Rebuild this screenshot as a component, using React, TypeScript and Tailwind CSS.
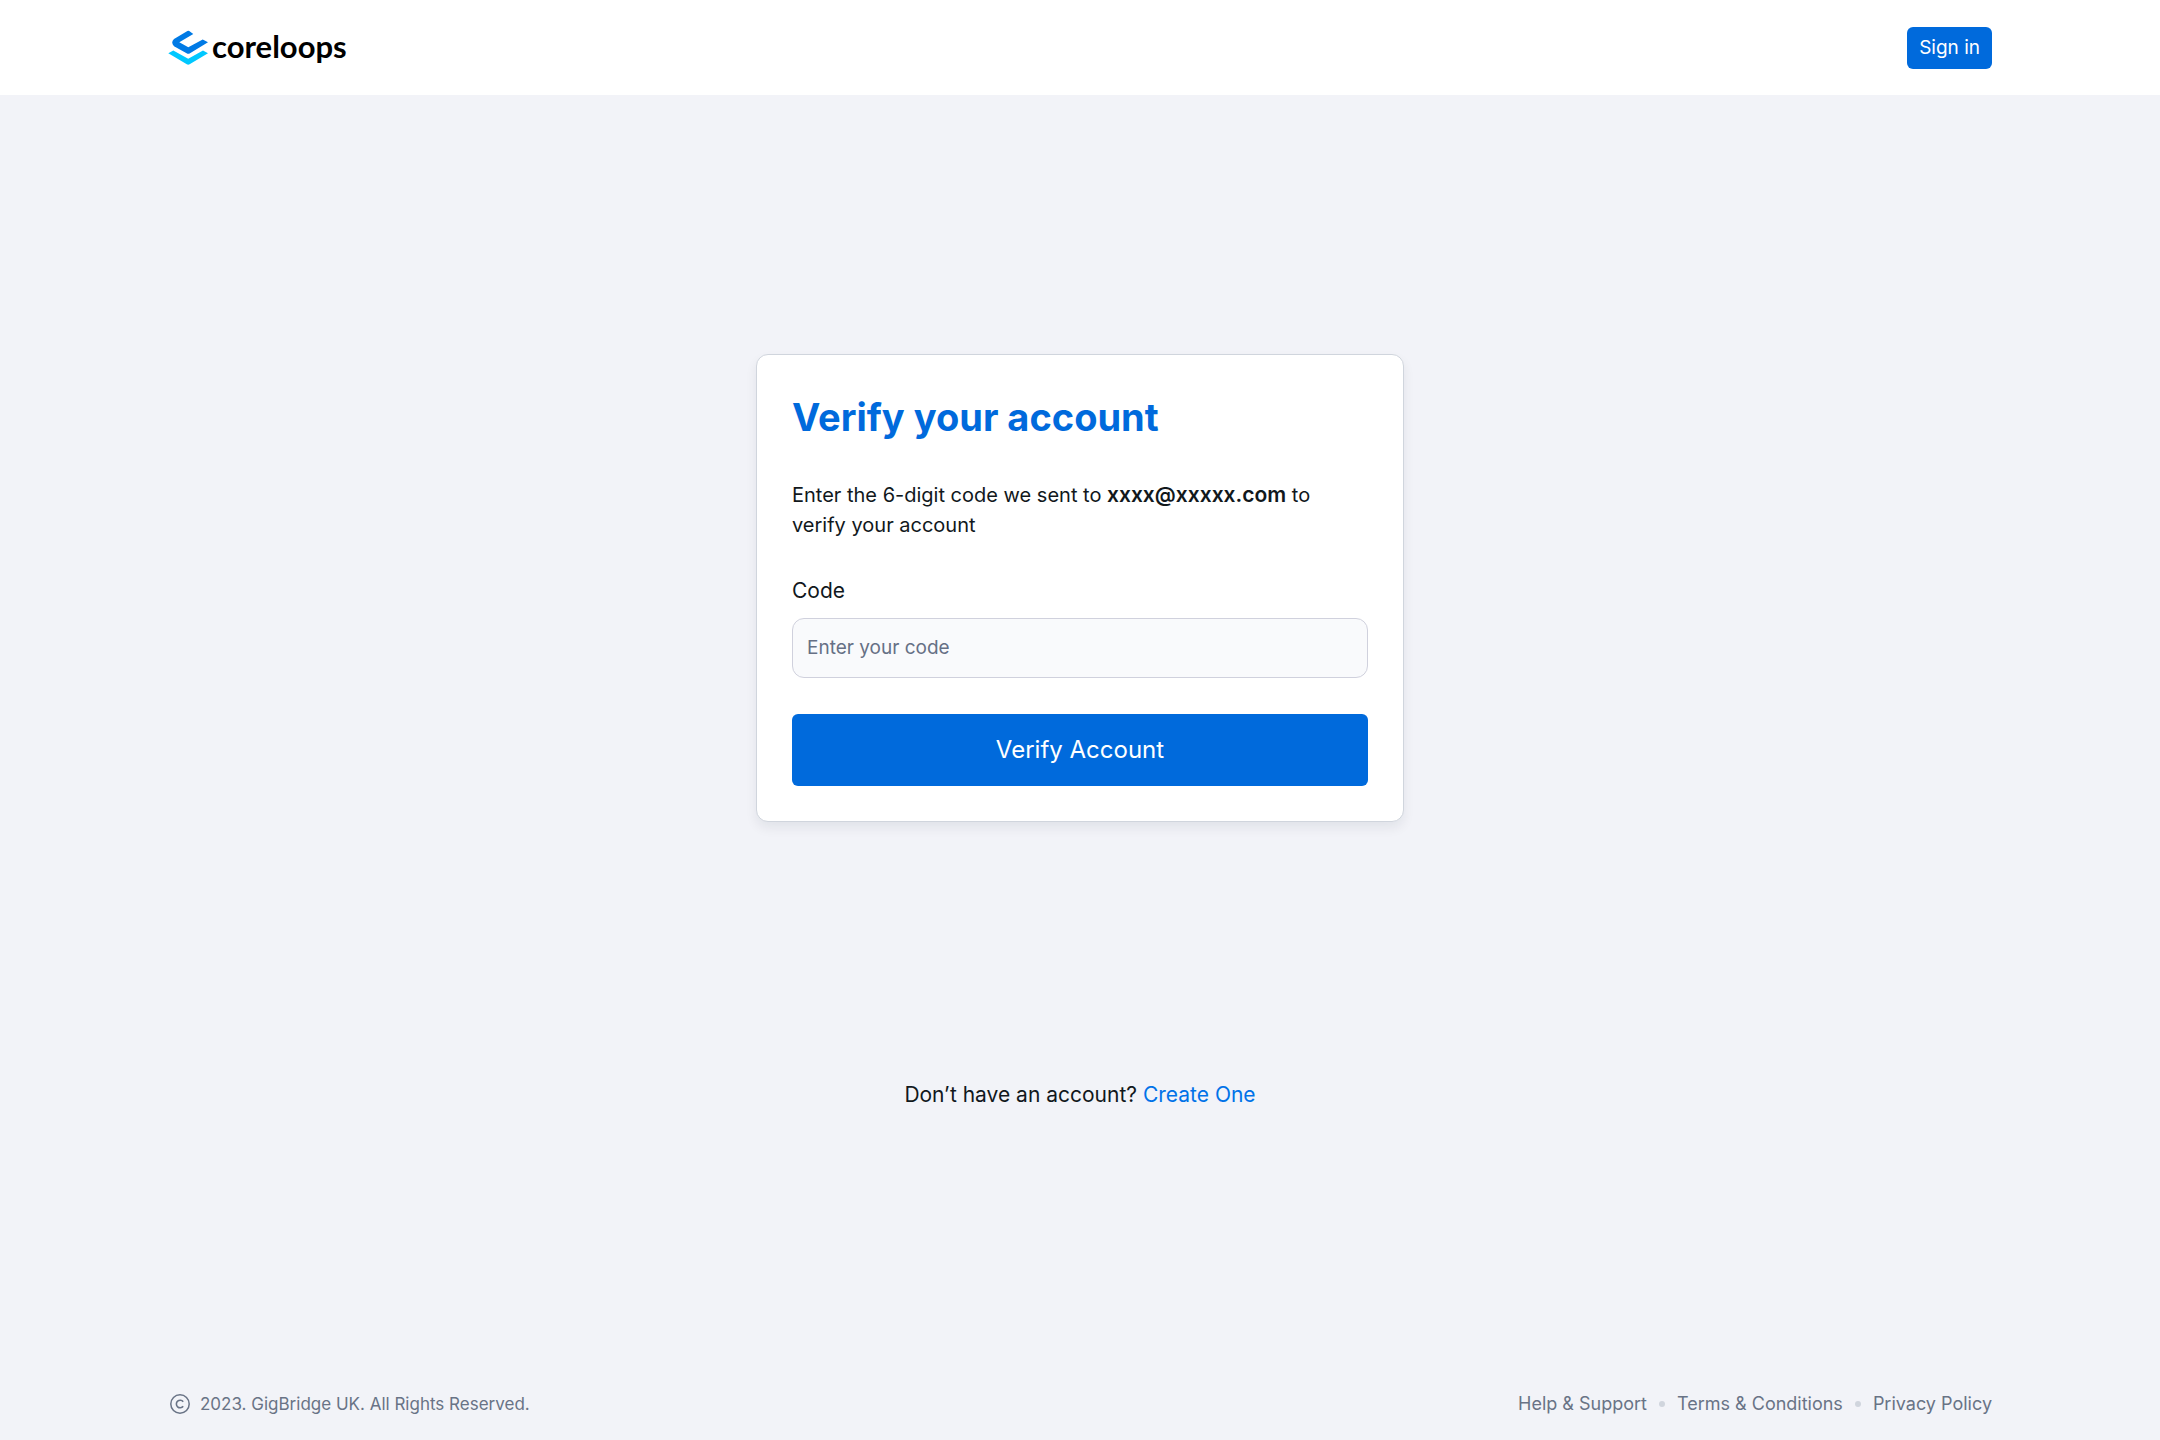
import { useState } from "react";

const FOOTER_LINKS = ["Help & Support", "Terms & Conditions", "Privacy Policy"];

function Logo() {
    return (
        <a href="#" aria-label="coreloops" className="flex items-start gap-1">
            <svg viewBox="0 0 40 36" className="w-10 h-9 shrink-0" aria-hidden="true">
                <path
                    d="M19.4 1.1Q20.3.5 21.2 1.1L25.3 3.9 11.3 12.3 20.3 17.3 34.7 9.4 40 12.3 22 23.2Q20.3 24.2 18.6 23.2L6 16.2Q2.4 12.4 6 9Z"
                    fill="#007ae5"
                />
                <path
                    d="M.3 23.3 5.3 20.5 20.2 28.8 35 20.5 40 23.3 21.6 34.3Q20.2 35.1 18.8 34.3Z"
                    fill="#00c8ff"
                />
            </svg>
            <span className="font-['Lato',sans-serif] font-bold text-[31px] leading-8 text-black">coreloops</span>
        </a>
    );
}

function CopyrightIcon() {
    return (
        <svg viewBox="0 0 24 24" className="w-6 h-6 shrink-0" fill="none" stroke="currentColor" aria-hidden="true">
            <circle cx="12" cy="12" r="9.2" strokeWidth="1.5" />
            <path d="M15.2 9.7A3.8 3.8 0 1 0 15.2 14.3" strokeWidth="1.6" />
        </svg>
    );
}

function VerifyCard() {
    const [code, setCode] = useState("");

    return (
        <form
            onSubmit={(e) => e.preventDefault()}
            className="w-full max-w-[648px] bg-white border border-[#d0d5dd] rounded-xl shadow-[0_6px_12px_rgba(16,24,40,0.07)] p-[35px]"
        >
            <h1 className="text-[#006adc] text-[38px] leading-[54px] font-bold">Verify your account</h1>
            <p className="mt-9 max-w-[540px] text-xl leading-[30px]">
                Enter the 6-digit code we sent to{" "}
                <strong className="font-semibold text-[21px]">xxxx@xxxxx.com</strong> to verify your account
            </p>
            <label htmlFor="code" className="block mt-9 text-[21px] leading-[30px]">
                Code
            </label>
            <input
                id="code"
                type="text"
                value={code}
                onChange={(e) => setCode(e.target.value)}
                placeholder="Enter your code"
                className="block w-full h-[60px] mt-3 px-3.5 text-[19px] bg-[#f9fafc] border border-[#d0d1dd] rounded-xl placeholder:text-[#667085]"
            />
            <button type="submit" className="w-full h-[72px] mt-9 rounded-md bg-[#006adc] text-white text-2xl">
                Verify Account
            </button>
        </form>
    );
}

export default function App() {
    return (
        <div className="min-h-screen flex flex-col bg-[#f2f3f8] text-[#11181c] font-['Inter',sans-serif]">
            <header className="flex items-center justify-between px-6 lg:px-42 pt-[27px] pb-[26px] bg-white">
                <Logo />
                <button type="button" className="h-[42px] px-3 rounded-md bg-[#006adc] text-white text-[19px]">
                    Sign in
                </button>
            </header>

            <main className="grow flex flex-col items-center px-6">
                <div className="grow w-full flex items-center justify-center">
                    <VerifyCard />
                </div>
                <p className="text-[21px] leading-[30px]">
                    Don’t have an account?{" "}
                    <a href="#" className="text-[#0072e8]">
                        Create One
                    </a>
                </p>
            </main>

            <footer className="mt-[282px] pb-6 px-6 lg:px-42 flex flex-wrap items-center justify-between text-[#697386] text-lg leading-6">
                <p className="flex items-center gap-2 text-[17px]">
                    <CopyrightIcon />
                    2023. GigBridge UK. All Rights Reserved.
                </p>
                <nav className="flex items-center">
                    {FOOTER_LINKS.map((link, i) => (
                        <span key={link} className="flex items-center">
                            {i > 0 && <span className="w-1.5 h-1.5 mx-3 rounded-full bg-[#d0d5dd]" />}
                            <a href="#">{link}</a>
                        </span>
                    ))}
                </nav>
            </footer>
        </div>
    );
}
